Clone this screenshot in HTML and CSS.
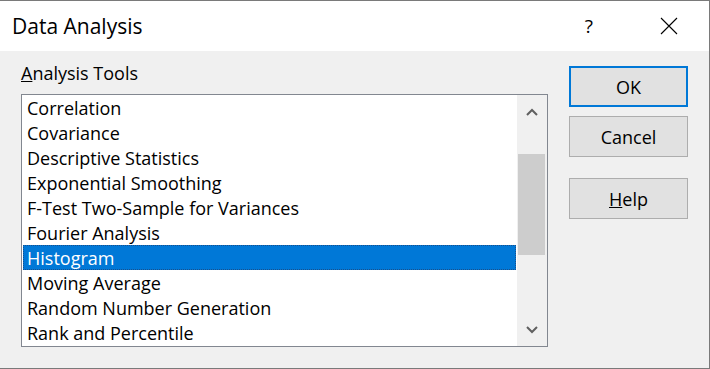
FILE: index.html
```html
<!DOCTYPE html>
<html>
<head>
<meta charset="utf-8">
<link rel="stylesheet" href="styles.css">
</head>
<body>
<div class="dialog">
  <div class="titlebar">
    <span class="title">Data Analysis</span>
    <span class="help-q">?</span>
    <svg class="close" width="18" height="18" viewBox="0 0 18 18"><path d="M1 1 L17 17 M17 1 L1 17" stroke="#000" stroke-width="1.1" fill="none"/></svg>
  </div>
  <div class="content">
    <div class="left">
      <div class="label"><u>A</u>nalysis Tools</div>
      <div class="listbox">
        <ul class="items">
          <li>Correlation</li>
          <li>Covariance</li>
          <li>Descriptive Statistics</li>
          <li>Exponential Smoothing</li>
          <li>F-Test Two-Sample for Variances</li>
          <li>Fourier Analysis</li>
          <li class="selected">Histogram</li>
          <li>Moving Average</li>
          <li>Random Number Generation</li>
          <li>Rank and Percentile</li>
        </ul>
        <div class="scrollbar">
          <div class="arrow">
            <svg width="12" height="8" viewBox="0 0 12 8"><path d="M1 7 L6 2 L11 7" stroke="#606060" stroke-width="2" fill="none"/></svg>
          </div>
          <div class="track"><div class="thumb"></div></div>
          <div class="arrow">
            <svg width="12" height="8" viewBox="0 0 12 8"><path d="M1 1 L6 6 L11 1" stroke="#606060" stroke-width="2" fill="none"/></svg>
          </div>
        </div>
      </div>
    </div>
    <div class="buttons">
      <button class="btn default">OK</button>
      <button class="btn">Cancel</button>
      <button class="btn help"><u>H</u>elp</button>
    </div>
  </div>
</div>
</body>
</html>
```
FILE: styles.css
```css
* { box-sizing: border-box; }
html, body { margin: 0; padding: 0; }
body {
  font-family: "Open Sans", "Noto Sans", sans-serif;
  color: #000;
  background: #f0f0f0;
}
.dialog {
  width: 710px;
  height: 369px;
  border: 1px solid #7a7a7a;
  border-left: none;
  background: #f0f0f0;
}
.titlebar {
  height: 50px;
  background: #fff;
  display: flex;
  align-items: center;
  padding-left: 12px;
}
.title {
  font-size: 21px;
  flex: 1;
}
.help-q {
  font-size: 19px;
  margin-right: 67px;
}
.close { margin-right: 31px; }
.content {
  display: flex;
  padding-top: 15px;
}
.left {
  margin-left: 21px;
  width: 527px;
}
.label {
  font-size: 18px;
  line-height: 22px;
  margin-top: -4px;
}
.listbox {
  margin-top: 10px;
  height: 253px;
  border: 1px solid #828790;
  background: #fff;
  display: flex;
}
.items {
  list-style: none;
  margin: 0;
  padding: 0;
  flex: 1;
}
.items li {
  height: 25px;
  line-height: 26px;
  font-size: 18px;
  padding-left: 4px;
  margin-left: 1px;
  margin-right: 1px;
  white-space: nowrap;
}
.items li.selected {
  background: #0078d7;
  color: #fff;
  outline: 1px dotted #1a4f8a;
  outline-offset: -1px;
}
.scrollbar {
  width: 30px;
  background: #f0f0f0;
  display: flex;
  flex-direction: column;
}
.arrow {
  height: 33px;
  display: flex;
  align-items: center;
  justify-content: center;
}
.track {
  flex: 1;
  padding: 26px 2px 0 1px;
}
.thumb {
  height: 101px;
  background: #cdcdcd;
}
.buttons {
  margin-left: 21px;
  display: flex;
  flex-direction: column;
  width: 119px;
}
.btn {
  font-family: inherit;
  font-size: 18px;
  height: 41px;
  background: #e1e1e1;
  border: 1px solid #adadad;
  color: #000;
  padding: 0;
  margin: 0 0 9px 0;
}
.btn.default {
  border: 2px solid #0078d7;
}
.btn.help { margin-top: 12px; }
```
